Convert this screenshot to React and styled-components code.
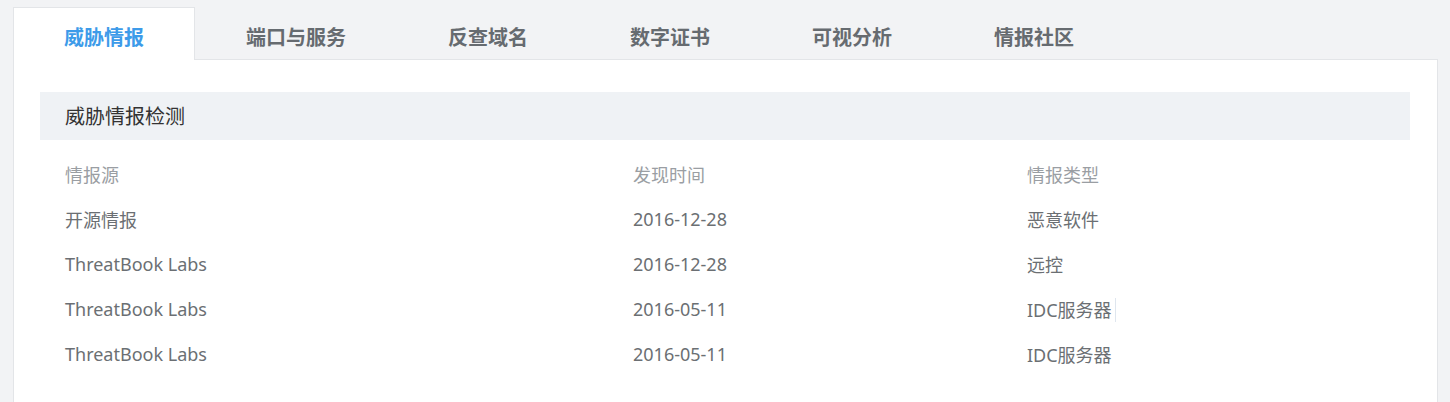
import React from 'react'
import styled, { createGlobalStyle } from 'styled-components'

const GlobalStyle = createGlobalStyle`
  html, body {
    margin: 0;
    padding: 0;
    background: #f2f3f5;
    font-family: "Noto Sans", "Noto Sans CJK SC", sans-serif;
  }
`

const tabs = ['威胁情报', '端口与服务', '反查域名', '数字证书', '可视分析', '情报社区']

const rows = [
  { source: '开源情报', time: '2016-12-28', type: '恶意软件' },
  { source: 'ThreatBook Labs', time: '2016-12-28', type: '远控' },
  { source: 'ThreatBook Labs', time: '2016-05-11', type: 'IDC服务器', caret: true },
  { source: 'ThreatBook Labs', time: '2016-05-11', type: 'IDC服务器' },
]

function App() {
  return (
    <>
      <GlobalStyle />
      <Page>
        <TabBar>
          {tabs.map((t, i) => (
            <Tab key={t} active={i === 0}>{t}</Tab>
          ))}
        </TabBar>
        <Panel>
          <SectionTitle>威胁情报检测</SectionTitle>
          <Table>
            <Row head>
              <Cell>情报源</Cell>
              <Cell>发现时间</Cell>
              <Cell>情报类型</Cell>
            </Row>
            {rows.map((r, i) => (
              <Row key={i}>
                <Cell>{r.source}</Cell>
                <Cell>{r.time}</Cell>
                <Cell>
                  <Caret show={r.caret}>{r.type}</Caret>
                </Cell>
              </Row>
            ))}
          </Table>
        </Panel>
      </Page>
    </>
  )
}

const Page = styled.div`
  padding: 7px 12px 0 13px;
  height: 402px;
  box-sizing: border-box;
  overflow: hidden;
`

const TabBar = styled.div`
  display: flex;
  height: 53px;
  position: relative;
  z-index: 1;
  margin-bottom: -1px;
`

const Tab = styled.div.withConfig({ shouldForwardProp: p => p !== 'active' })`
  display: flex;
  align-items: center;
  padding: 6px 50px 0;
  border: 1px solid ${p => (p.active ? '#e3e5e8' : 'transparent')};
  border-bottom: none;
  background: ${p => (p.active ? '#ffffff' : 'transparent')};
  color: ${p => (p.active ? '#3d9be9' : '#666b70')};
  font-family: "Noto Sans CJK SC", sans-serif;
  font-size: 20px;
  font-weight: 700;
  line-height: 1;
  white-space: nowrap;
  cursor: pointer;
`

const Panel = styled.div`
  background: #ffffff;
  border: 1px solid #e3e5e8;
  border-bottom: none;
  padding: 32px 27px 0 26px;
  height: 400px;
`

const SectionTitle = styled.div`
  background: #eff2f5;
  height: 47px;
  display: flex;
  align-items: center;
  padding: 0 25px 1px;
  font-family: "Noto Sans CJK SC", sans-serif;
  font-size: 20px;
  color: #333;
`

const Table = styled.div`
  margin-top: 12px;
`

const Row = styled.div.withConfig({ shouldForwardProp: p => p !== 'head' })`
  display: grid;
  grid-template-columns: 568px 394px 1fr;
  height: 45px;
  align-items: center;
  font-size: 18px;
  color: ${p => (p.head ? '#9a9ea3' : '#6b6f73')};
`

const Cell = styled.div`
  padding-left: 25px;
  padding-bottom: 2px;
  white-space: nowrap;
`

const Caret = styled.span.withConfig({ shouldForwardProp: p => p !== 'show' })`
  padding-right: 3px;
  border-right: 1px solid ${p => (p.show ? '#dfe6ee' : 'transparent')};
`

export default App
